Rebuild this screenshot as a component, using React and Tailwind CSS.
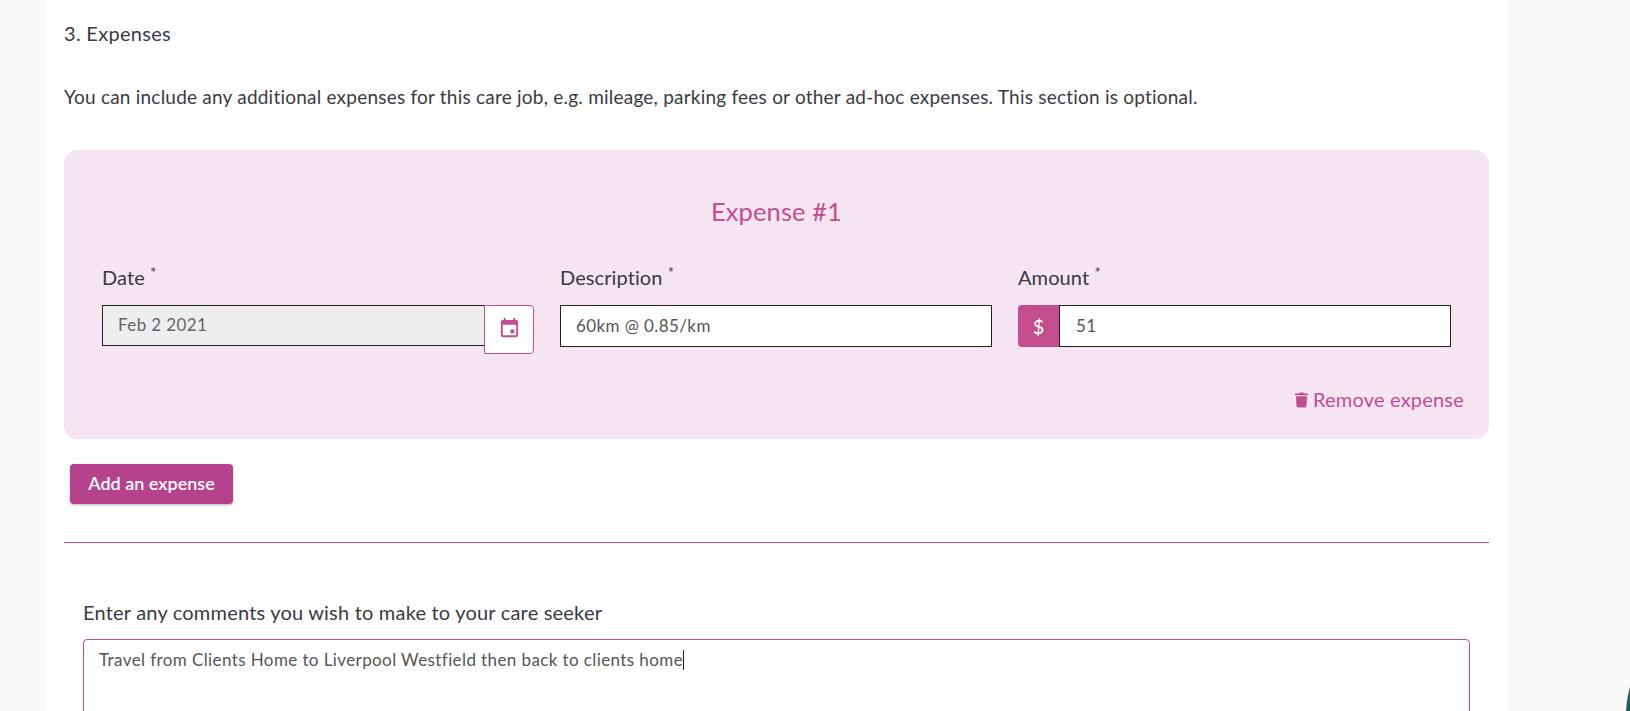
const font = 'font-["Lato","Noto_Sans",sans-serif]';

function Required({ children }) {
  return (
    <label className="block h-[27px] text-[20px] leading-[27px] tracking-[0.1px] text-[#3a3a42]">
      {children} <sup className="text-[15px] leading-none">*</sup>
    </label>
  );
}

export default function App() {
  return (
    <div className={`relative h-[711px] overflow-hidden bg-[#f9f9f9] ${font}`}>
      <div className="ml-[46px] w-[1462px] h-full bg-white px-[18px] pt-[20px]">
        {/* Section heading */}
        <h3 className="text-[20px] leading-[27px] tracking-[0.3px] text-[#3a3a42]">3. Expenses</h3>
        <p className="mt-[36px] text-[19px] leading-[27px] tracking-[0.22px] text-[#3a3a42]">
          You can include any additional expenses for this care job, e.g. mileage, parking fees or other ad-hoc expenses. This section is optional.
        </p>

        {/* Expense card */}
        <div className="mt-[40px] h-[289px] w-[1425px] rounded-[14px] bg-[#f5e4f1] px-[38px] pt-[45px]">
          <h4 className="text-center text-[25.5px] leading-[32px] tracking-[0.1px] text-[#c44d90]">Expense #1</h4>
          <div className="mt-[37px] grid grid-cols-[432px_432px_433px] gap-x-[26px]">
            <div>
              <Required>Date</Required>
              <div className="mt-[14px] flex items-start">
                <div className="flex h-[41px] w-[383px] items-center border border-[#231f20] bg-[#eeeeee] pb-[2px] pl-[15px] text-[17px] tracking-[0.4px] text-[#666666]">
                  Feb 2 2021
                </div>
                <button className="-ml-px flex h-[49px] w-[50px] items-center justify-center rounded-r-[4px] border border-[#c44d90] bg-white pb-[2px]">
                  <svg width="23" height="23" viewBox="0 0 24 24" fill="#c44d90">
                    <path d="M19 3h-1V1h-2v2H8V1H6v2H5c-1.1 0-2 .9-2 2v14c0 1.1.9 2 2 2h14c1.1 0 2-.9 2-2V5c0-1.1-.9-2-2-2zm0 16H5V8h14v11z" />
                    <path d="M13 13h4v4h-4z" />
                  </svg>
                </button>
              </div>
            </div>
            <div>
              <Required>Description</Required>
              <div className="mt-[14px] flex h-[42px] items-center border border-[#231f20] bg-white pl-[15px] text-[17px] tracking-[0.4px] text-[#555555]">
                60km @ 0.85/km
              </div>
            </div>
            <div>
              <Required>Amount</Required>
              <div className="mt-[14px] flex h-[42px]">
                <div className="flex w-[41px] items-center justify-center rounded-l-[4px] bg-[#c44d90] text-[20px] text-white">$</div>
                <div className="flex flex-1 items-center border border-[#231f20] bg-white pl-[16px] text-[17px] tracking-[0.4px] text-[#555555]">51</div>
              </div>
            </div>
          </div>
          <div className="mt-[32px] -mr-[13px] flex items-center justify-end gap-[5px] text-[20px] leading-[27px] tracking-[0.2px] text-[#c44d90]">
            <svg width="13" height="16" viewBox="0 0 448 512" fill="#c44d90">
              <path d="M432 32H312l-9.4-18.7A24 24 0 0 0 281.1 0H166.8a23.7 23.7 0 0 0-21.4 13.3L136 32H16A16 16 0 0 0 0 48v32a16 16 0 0 0 16 16h416a16 16 0 0 0 16-16V48a16 16 0 0 0-16-16zM53.2 467a48 48 0 0 0 47.9 45h245.8a48 48 0 0 0 47.9-45L416 128H32z" />
            </svg>
            <span>Remove expense</span>
          </div>
        </div>

        <button className="ml-[6px] mt-[25px] block h-[40px] w-[163px] rounded-[4px] bg-[#b5428c] pb-[2px] text-[18px] font-semibold text-white shadow-[0_1px_3px_rgba(0,0,0,0.3)]">
          Add an expense
        </button>

        <hr className="mt-[38px] w-[1425px] border-t border-[#c44d90]" />

        {/* Comments */}
        <div className="mt-[56px] ml-[19px] w-[1387px]">
          <label className="block text-[20px] leading-[27px] tracking-[0.2px] text-[#3a3a42]">Enter any comments you wish to make to your care seeker</label>
          <div className="mt-[13px] h-[120px] rounded-[4px] border border-[#c44d90] bg-white px-[15px] pt-[6px] text-[17px] leading-[24px] tracking-[0.4px] text-[#555555]">
            Travel from Clients Home to Liverpool Westfield then back to clients home
            <span className="inline-block h-[20px] w-px translate-y-[4px] bg-[#222222]" />
          </div>
        </div>
      </div>

      {/* Chat bubble peeking in at the corner */}
      <div className="absolute left-[1626px] top-[615px] h-[200px] w-[200px] rounded-full bg-[#1f5f5b]" />
    </div>
  );
}
